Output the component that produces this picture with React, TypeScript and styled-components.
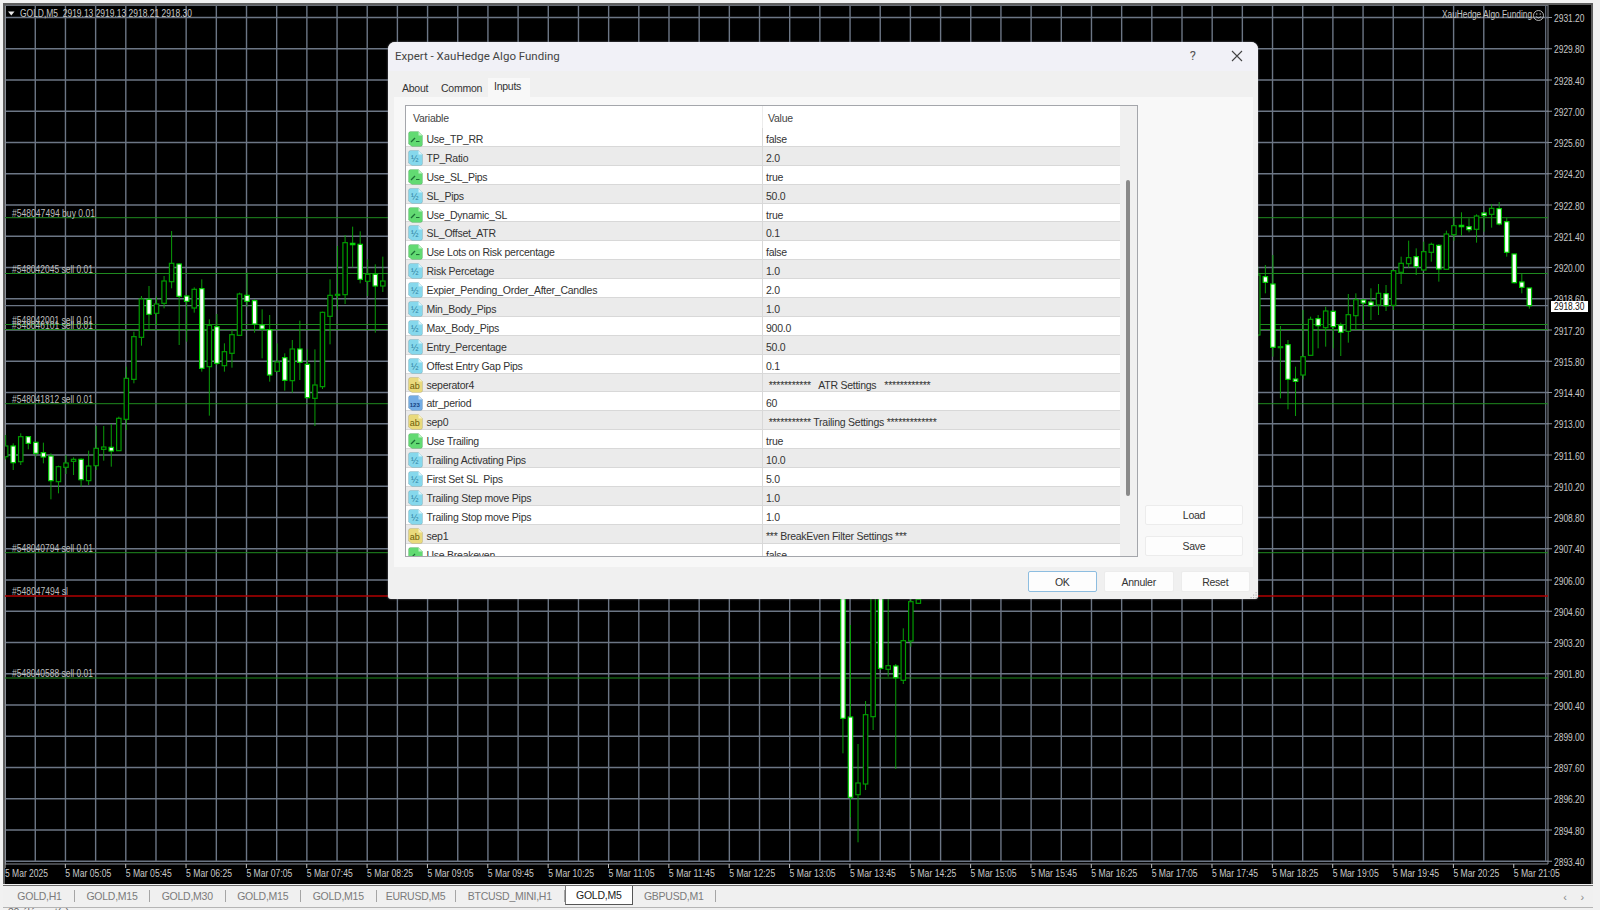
import { FC } from "react";
import styled, { createGlobalStyle } from "styled-components";

const GlobalStyle = createGlobalStyle`
  html, body {
    margin: 0;
    padding: 0;
    background: #f2f2f2;
  }
`;

const UI_FONT = `"Liberation Sans", Arial, sans-serif`;

const Page = styled.div`
  width: 1600px;
  height: 910px;
  box-sizing: border-box;
  padding: 3px 7px 0 3px;
  display: flex;
  flex-direction: column;
  overflow: hidden;
  background: #f1f1f1;
  font-family: ${UI_FONT};
  font-size: 10.5px;
  letter-spacing: -0.25px;
`;

const ChartFrame = styled.div`
  position: relative;
  flex: none;
  width: 1590px;
  height: 881px;
  box-sizing: border-box;
  border: 2px solid #5e5e5e;
  border-bottom: 0;
  background: #000;
`;

const ChartSvg = styled.svg`
  display: block;
  font-family: ${UI_FONT};
  letter-spacing: 0;
`;

const Dialog = styled.div`
  position: absolute;
  left: 383px;
  top: 37px;
  width: 870px;
  height: 557px;
  display: flex;
  flex-direction: column;
  border-radius: 7px 7px 3px 3px;
  background: #f0f0f0;
  box-shadow: 0 0 2px rgba(150, 150, 160, 0.9);
  overflow: hidden;
`;

const TitleBar = styled.div`
  flex: none;
  height: 29px;
  box-sizing: border-box;
  display: flex;
  align-items: center;
  padding: 0 15px 2px 7px;
  background: #f1f1f7;
  color: #444;
  font-size: 11.5px;
  letter-spacing: 0;
  font-family: Roboto, sans-serif;
`;

const Title = styled.div`
  flex: 1;
`;

const HelpMark = styled.span`
  margin-right: 35px;
  font-size: 13px;
  color: #555;
`;

const TabRow = styled.div`
  flex: none;
  height: 26px;
  display: flex;
  align-items: flex-end;
  padding-left: 9px;
`;

const PageTab = styled.div<{ $active?: boolean; $w: number }>`
  width: ${(p) => p.$w}px;
  height: ${(p) => (p.$active ? 19 : 17)}px;
  margin-right: 1px;
  box-sizing: border-box;
  padding: ${(p) => (p.$active ? "2px 0 0 6px" : "2px 0 0 5px")};
  background: ${(p) => (p.$active ? "#f8f8f8" : "#f0f0f0")};
  color: #333;
`;

const Panel = styled.div`
  flex: none;
  height: 470px;
  margin: 0 5px 0 6px;
  box-sizing: border-box;
  padding: 8px 10px 10px 11px;
  display: flex;
  background: #f8f8f8;
`;

const TableBox = styled.div`
  flex: none;
  width: 733px;
  height: 452px;
  box-sizing: border-box;
  display: flex;
  border: 1.5px solid #a4a6ab;
  background: #fff;
  overflow: hidden;
`;

const TableBody = styled.div`
  flex: 1;
  min-width: 0;
`;

const HeaderRow = styled.div`
  height: 22px;
  display: grid;
  grid-template-columns: 356px 1fr;
  align-items: center;
  color: #444;
`;

const HeaderCell = styled.div`
  height: 100%;
  box-sizing: border-box;
  display: flex;
  align-items: center;
  padding: 2px 0 0 7px;
  & + & {
    padding-left: 5px;
    border-left: 1px solid #ececec;
  }
`;

const Row = styled.div<{ $odd: boolean }>`
  height: 18.9px;
  box-sizing: border-box;
  display: grid;
  grid-template-columns: 356px 1fr;
  border-bottom: 1px solid #d8d8d8;
  background: ${(p) => (p.$odd ? "#ebebeb" : "#fff")};
  color: #333;
`;

const VariableCell = styled.div`
  display: flex;
  align-items: center;
  gap: 4px;
  padding-left: 1.5px;
  padding-top: 3px;
  white-space: pre;
`;

const ValueCell = styled.div`
  display: flex;
  align-items: center;
  padding: 3px 0 0 3px;
  border-left: 1px solid #d8d8d8;
  white-space: pre;
`;

const ScrollTrack = styled.div`
  flex: none;
  width: 17px;
  box-sizing: border-box;
  padding: 74px 0 0 5.5px;
  background: #f0f0f0;
`;

const ScrollThumb = styled.div`
  width: 4.5px;
  height: 316px;
  border-radius: 2px;
  background: #8a8a8a;
`;

const SideColumn = styled.div`
  flex: 1;
  display: flex;
  flex-direction: column;
  justify-content: flex-end;
  align-items: flex-end;
  gap: 11px;
  padding: 0 0 1px 0;
`;

const SideButton = styled.button`
  width: 98px;
  height: 20px;
  padding: 0;
  border: 1px solid #ececec;
  border-radius: 2px;
  background: #fdfdfd;
  font: 10.5px ${UI_FONT};
  letter-spacing: -0.25px;
  color: #333;
`;

const Footer = styled.div`
  flex: 1;
  display: flex;
  justify-content: flex-end;
  align-items: flex-start;
  gap: 7px;
  padding: 4px 8px 0 0;
`;

const FooterButton = styled.button<{ $primary?: boolean }>`
  width: 69.5px;
  height: 21px;
  padding: 0;
  border: 1px solid ${(p) => (p.$primary ? "#8dbde0" : "#ececec")};
  border-radius: 2px;
  background: #fdfdfd;
  font: 10.5px ${UI_FONT};
  letter-spacing: -0.25px;
  color: #333;
`;

const ResizeGrip = styled.svg`
  position: absolute;
  right: 0;
  bottom: 0;
`;

const TabBar = styled.div`
  flex: none;
  height: 21px;
  margin-top: 1px;
  padding-left: 2px;
  display: flex;
  align-items: stretch;
  border-top: 1px solid #6d6d6d;
  background: #f0f0f0;
`;

const ChartTab = styled.div<{ $w: number; $active?: boolean }>`
  flex: none;
  width: ${(p) => p.$w}px;
  box-sizing: border-box;
  display: flex;
  align-items: center;
  justify-content: center;
  margin: ${(p) => (p.$active ? "0 0 2px" : "4px 0 5px")};
  border-right: 1px solid ${(p) => (p.$active ? "#555" : "#a5a5a5")};
  border-bottom: ${(p) => (p.$active ? "1px solid #555" : "0")};
  border-left: ${(p) => (p.$active ? "1px solid #777" : "0")};
  background: ${(p) => (p.$active ? "#fff" : "transparent")};
  color: ${(p) => (p.$active ? "#222" : "#7b7b7b")};
`;

const TabSpacer = styled.div`
  flex: 1;
`;

const TabArrows = styled.div`
  display: flex;
  align-items: center;
  gap: 14px;
  padding-right: 9px;
  color: #888;
  font-size: 11px;
`;

const StatusStrip = styled.div`
  flex: none;
  height: 5px;
  overflow: hidden;
  padding-left: 5px;
  line-height: 9px;
  color: #666;
  border-top: 1px solid #b5b5b5;
`;

type VarKind = "bool" | "double" | "text" | "int";

const ICON_STYLE: Record<VarKind, { fill: string; fold: string; ink: string; label: string }> = {
  bool: { fill: "#62da72", fold: "#c4f3c9", ink: "#1c6f36", label: "" },
  double: { fill: "#86d8ec", fold: "#d8f4fb", ink: "#2a7f9e", label: "½" },
  text: { fill: "#e9da7c", fold: "#f8f1c4", ink: "#6d5d08", label: "ab" },
  int: { fill: "#74ade5", fold: "#cbe1f6", ink: "#123f80", label: "123" },
};

const VarIcon: FC<{ kind: VarKind }> = ({ kind }) => {
  const s = ICON_STYLE[kind];
  return (
    <svg width="15" height="16" viewBox="0 0 15 16" style={{ flex: "none" }}>
      <path
        d="M2.5 .5H10.5L14.5 4.5V13.5Q14.5 15.5 12.5 15.5H4L.5 13V2.5Q.5 .5 2.5 .5Z"
        fill={s.fill}
        stroke="#0000001a"
      />
      <path d="M10.5 .5V4.5H14.5Z" fill={s.fold} />
      {kind === "bool" ? (
        <g fill="none" stroke={s.ink} strokeWidth="1.2">
          <path d="M3 11L7 7" />
          <path d="M8 10.5H11.5" />
        </g>
      ) : (
        <text
          x="6.8"
          y="11.5"
          textAnchor="middle"
          fontSize={kind === "int" ? 6 : 9}
          letterSpacing="0"
          fontFamily={UI_FONT}
          fontWeight={kind === "int" ? 700 : 400}
          fill={s.ink}
        >
          {s.label}
        </text>
      )}
    </svg>
  );
};

const inputs: [string, string, VarKind][] = [
  ["Use_TP_RR", "false", "bool"],
  ["TP_Ratio", "2.0", "double"],
  ["Use_SL_Pips", "true", "bool"],
  ["SL_Pips", "50.0", "double"],
  ["Use_Dynamic_SL", "true", "bool"],
  ["SL_Offset_ATR", "0.1", "double"],
  ["Use Lots on Risk percentage", "false", "bool"],
  ["Risk Percetage", "1.0", "double"],
  ["Expier_Pending_Order_After_Candles", "2.0", "double"],
  ["Min_Body_Pips", "1.0", "double"],
  ["Max_Body_Pips", "900.0", "double"],
  ["Entry_Percentage", "50.0", "double"],
  ["Offest Entry Gap Pips", "0.1", "double"],
  ["seperator4", " ***********   ATR Settings   ************", "text"],
  ["atr_period", "60", "int"],
  ["sep0", " *********** Trailing Settings *************", "text"],
  ["Use Trailing", "true", "bool"],
  ["Trailing Activating Pips", "10.0", "double"],
  ["First Set SL  Pips", "5.0", "double"],
  ["Trailing Step move Pips", "1.0", "double"],
  ["Trailing Stop move Pips", "1.0", "double"],
  ["sep1", "*** BreakEven Filter Settings ***", "text"],
  ["Use Breakeven", "false", "bool"],
];

const chartTabs: [string, number][] = [
  ["GOLD,H1", 70],
  ["GOLD,M15", 75],
  ["GOLD,M30", 75.5],
  ["GOLD,M15", 75.5],
  ["GOLD,M15", 75.5],
  ["EURUSD,M5", 79],
  ["BTCUSD_MINI,H1", 109.5],
  ["GOLD,M5", 67.5],
  ["GBPUSD,M1", 83.5],
];

// candle data in 3x zoomed screen coordinates: index, high, body top, body bottom, low, white body
type Candle = [number, number, number, number, number, number];

const candles: Candle[] = [
  [0, 1305, 1338, 1370, 1378, 0], [1, 1330, 1338, 1388, 1410, 1], [2, 1300, 1310, 1385, 1395, 0],
  [3, 1308, 1310, 1330, 1348, 1], [4, 1325, 1327, 1360, 1370, 1], [5, 1328, 1358, 1371, 1390, 1],
  [6, 1360, 1368, 1442, 1498, 1], [7, 1397, 1400, 1445, 1480, 0], [8, 1365, 1389, 1402, 1422, 0],
  [9, 1372, 1378, 1384, 1425, 0], [10, 1375, 1378, 1439, 1460, 1], [11, 1352, 1398, 1442, 1455, 0],
  [12, 1278, 1345, 1397, 1410, 0], [13, 1278, 1341, 1348, 1382, 0], [14, 1272, 1342, 1353, 1400, 1],
  [15, 1250, 1255, 1352, 1352, 0], [16, 1100, 1135, 1258, 1290, 0], [17, 995, 1010, 1138, 1150, 0],
  [18, 888, 897, 1012, 1037, 0], [19, 858, 898, 943, 990, 1], [20, 890, 912, 940, 975, 0],
  [21, 828, 843, 910, 925, 0], [22, 693, 790, 845, 865, 0], [23, 790, 792, 889, 1035, 1],
  [24, 885, 888, 904, 1025, 1], [25, 862, 868, 924, 938, 0], [26, 838, 866, 1105, 1115, 1],
  [27, 958, 976, 1100, 1247, 0], [28, 942, 980, 1090, 1095, 1], [29, 1030, 1055, 1097, 1115, 0],
  [30, 990, 1004, 1060, 1103, 0], [31, 878, 882, 1006, 1008, 0], [32, 818, 886, 904, 920, 1],
  [33, 898, 902, 972, 998, 1], [34, 928, 975, 987, 1075, 1], [35, 945, 989, 1125, 1145, 1],
  [36, 1030, 1086, 1114, 1116, 0], [37, 1060, 1073, 1141, 1172, 1], [38, 1020, 1047, 1142, 1178, 0],
  [39, 962, 1047, 1087, 1140, 1], [40, 1048, 1093, 1193, 1195, 1], [41, 1048, 1155, 1195, 1278, 0],
  [42, 935, 937, 1160, 1167, 0], [43, 838, 886, 949, 1033, 0], [44, 738, 883, 886, 928, 0],
  [45, 705, 728, 884, 912, 0], [46, 680, 730, 734, 802, 1], [47, 694, 733, 838, 850, 1],
  [48, 778, 823, 844, 888, 0], [49, 793, 823, 858, 998, 1], [50, 770, 843, 858, 876, 0],
  // under the dialog's lower edge
  [111, 1500, 1500, 2155, 2260, 1], [112, 1875, 2151, 2392, 2452, 1], [113, 2232, 2349, 2384, 2527, 0],
  [114, 2103, 2144, 2352, 2370, 0], [115, 1500, 1500, 2150, 2190, 0], [116, 1500, 1500, 2005, 2010, 1],
  [117, 1500, 1997, 2008, 2030, 0], [118, 1992, 1998, 2033, 2307, 1], [119, 1885, 1922, 2041, 2052, 0],
  [120, 1770, 1805, 1923, 1940, 0], [121, 1500, 1798, 1810, 1812, 0],
  // right of the dialog
  [166, 800, 825, 1005, 1010, 0], [167, 795, 830, 847, 880, 1], [168, 765, 852, 1042, 1070, 1],
  [169, 978, 1040, 1043, 1195, 0], [170, 1020, 1034, 1138, 1228, 1], [171, 1100, 1137, 1144, 1248, 1],
  [172, 930, 1070, 1125, 1138, 0], [173, 950, 958, 1066, 1066, 0], [174, 945, 956, 977, 1045, 1],
  [175, 920, 933, 983, 1040, 0], [176, 932, 934, 980, 1045, 1], [177, 968, 976, 997, 1068, 1],
  [178, 882, 944, 994, 1028, 0], [179, 880, 899, 947, 990, 0], [180, 897, 900, 909, 968, 1],
  [181, 865, 906, 917, 960, 1], [182, 852, 880, 915, 945, 0], [183, 855, 881, 917, 933, 1],
  [184, 810, 812, 916, 930, 0], [185, 770, 790, 817, 852, 0], [186, 722, 773, 791, 803, 0],
  [187, 745, 770, 800, 825, 1], [188, 725, 755, 810, 812, 0], [189, 728, 733, 757, 785, 0],
  [190, 733, 736, 807, 845, 1], [191, 692, 702, 808, 808, 0], [192, 650, 677, 704, 722, 0],
  [193, 637, 676, 680, 708, 1], [194, 655, 680, 689, 697, 1], [195, 643, 648, 688, 728, 0],
  [196, 636, 639, 647, 695, 1], [197, 612, 625, 643, 683, 0], [198, 606, 626, 672, 676, 1],
  [199, 652, 665, 757, 770, 1], [200, 762, 762, 848, 850, 1], [201, 822, 846, 862, 880, 1],
  [202, 864, 864, 917, 926, 1],
];

const prices = [
  "2931.20", "2929.80", "2928.40", "2927.00", "2925.60", "2924.20", "2922.80", "2921.40", "2920.00", "2918.60",
  "2917.20", "2915.80", "2914.40", "2913.00", "2911.60", "2910.20", "2908.80", "2907.40", "2906.00", "2904.60",
  "2903.20", "2901.80", "2900.40", "2899.00", "2897.60", "2896.20", "2894.80", "2893.40",
];

const times = [
  "5 Mar 2025", "5 Mar 05:05", "5 Mar 05:45", "5 Mar 06:25", "5 Mar 07:05", "5 Mar 07:45", "5 Mar 08:25",
  "5 Mar 09:05", "5 Mar 09:45", "5 Mar 10:25", "5 Mar 11:05", "5 Mar 11:45", "5 Mar 12:25", "5 Mar 13:05",
  "5 Mar 13:45", "5 Mar 14:25", "5 Mar 15:05", "5 Mar 15:45", "5 Mar 16:25", "5 Mar 17:05", "5 Mar 17:45",
  "5 Mar 18:25", "5 Mar 19:05", "5 Mar 19:45", "5 Mar 20:25", "5 Mar 21:05",
];

const orders: [string, number, number, number][] = [
  ["#548047494 buy 0.01", 83, 213, 217.7],
  ["#548042045 sell 0.01", 81, 269, 273.5],
  ["#548042001 sell 0.01", 81, 320, 324.5],
  ["#548046101 sell 0.01", 81, 325, 329.5],
  ["#548041812 sell 0.01", 81, 399, 403.7],
  ["#548040794 sell 0.01", 81, 548, 552.7],
  ["#548040588 sell 0.01", 81, 673, 678],
];

const PLOT_RIGHT = 1548;
const PLOT_BOTTOM = 862;
const GRID = "#6c7685";

const rowY = (i: number) => 17.5 + i * 31.25;
const columnX = (i: number) => 5.1 + i * 30.177;

const CandleMark: FC<{ candle: Candle }> = ({ candle }) => {
  const [i, high, top, bottom, low, white] = candle;
  const x = 5.67 + i * 7.543;
  return (
    <g>
      <line x1={x} x2={x} y1={high / 3} y2={low / 3} stroke="#0a9c0a" strokeWidth="1" />
      <rect
        x={x - 2.2}
        y={top / 3}
        width="4.4"
        height={Math.max((bottom - top) / 3, 1)}
        fill={white ? "#fff" : "#000"}
        stroke={white ? "#00d000" : "#009c00"}
        strokeWidth="1.2"
      />
    </g>
  );
};

const Chart: FC = () => (
  <ChartSvg width="1586" height="879" viewBox="5 5 1586 879">
    {prices.map((_, i) => (
      <line key={i} x1="5" x2={PLOT_RIGHT} y1={rowY(i)} y2={rowY(i)} stroke={GRID} strokeWidth="1.4" />
    ))}
    {Array.from({ length: 50 }, (_, i) => (
      <line key={i} x1={columnX(i)} x2={columnX(i)} y1="5" y2={PLOT_BOTTOM} stroke={GRID} strokeWidth="1.4" />
    ))}
    <line x1="1545.7" x2="1545.7" y1="5" y2={PLOT_BOTTOM} stroke={GRID} strokeWidth="1.2" />
    <line x1={PLOT_RIGHT} x2={PLOT_RIGHT} y1="5" y2="864" stroke="#8a8f98" strokeWidth="1" />
    <line x1="5" x2={PLOT_RIGHT} y1="864" y2="864" stroke="#8a8f98" strokeWidth="1" />
    <line x1="5.5" x2="5.5" y1="5" y2="864" stroke="#8a8f98" strokeWidth="1" />
    <line x1="5" x2={PLOT_RIGHT} y1="5.5" y2="5.5" stroke="#6a6f78" strokeWidth="1" />

    {/* bid line */}
    <line x1="5" x2={PLOT_RIGHT} y1="305.7" y2="305.7" stroke={GRID} strokeWidth="1.2" />

    {orders.map(([, , , y]) => (
      <line key={y} x1="5" x2={PLOT_RIGHT} y1={y} y2={y} stroke="#1f8a1f" strokeWidth="1" />
    ))}
    <line x1="5" x2={PLOT_RIGHT} y1="596" y2="596" stroke="#b00000" strokeWidth="1.4" />

    {candles.map((c) => (
      <CandleMark key={c[0]} candle={c} />
    ))}

    {orders.map(([label, w, y]) => (
      <text key={label} x="12" y={y + 3.5} fontSize="10" textLength={w} lengthAdjust="spacingAndGlyphs" fill="#bdbdbd">
        {label}
      </text>
    ))}
    <text x="12" y="594.5" fontSize="10" textLength="56" lengthAdjust="spacingAndGlyphs" fill="#bdbdbd">
      #548047494 sl
    </text>

    <path d="M8 11.5H14.5L11.25 15.5Z" fill="#e8e8e8" />
    <text x="20" y="17" fontSize="10" textLength="172" lengthAdjust="spacingAndGlyphs" fill="#c6c6c6" xmlSpace="preserve">
      GOLD,M5  2919.13 2919.13 2918.21 2918.30
    </text>
    <text x="1442" y="18" fontSize="10" textLength="90" lengthAdjust="spacingAndGlyphs" fill="#c6c6c6">
      XauHedge Algo Funding
    </text>
    <g fill="none" stroke="#c6c6c6" strokeWidth="0.9">
      <circle cx="1538.5" cy="15.5" r="5" />
      <path d="M1535.8 16.5Q1538.5 19.5 1541.2 16.5" />
    </g>
    <circle cx="1536.8" cy="14" r=".7" fill="#c6c6c6" />
    <circle cx="1540.2" cy="14" r=".7" fill="#c6c6c6" />

    {prices.map((p, i) => (
      <g key={p}>
        <line x1={PLOT_RIGHT} x2="1552" y1={rowY(i)} y2={rowY(i)} stroke="#8a8f98" />
        <text x="1554" y={rowY(i) + 4.5} fontSize="10" textLength="30.5" lengthAdjust="spacingAndGlyphs" fill="#c8c8c8">
          {p}
        </text>
      </g>
    ))}
    <rect x="1551" y="301" width="37" height="11" fill="#fff" />
    <text x="1554" y="310" fontSize="10" textLength="30.5" lengthAdjust="spacingAndGlyphs" fill="#111">
      2918.30
    </text>

    {times.map((t, i) => {
      const x = 5 + i * 60.35;
      return (
        <g key={t}>
          <line x1={x} x2={x} y1="864" y2="868" stroke="#c0c0c0" />
          <text x={x} y="877" fontSize="10" textLength={i === 0 ? 43 : 46} lengthAdjust="spacingAndGlyphs" fill="#c8c8c8">
            {t}
          </text>
        </g>
      );
    })}
  </ChartSvg>
);

export default function App() {
  return (
    <>
      <GlobalStyle />
      <Page>
        <ChartFrame>
          <Chart />
          <Dialog>
            <TitleBar>
              <Title>Expert - XauHedge Algo Funding</Title>
              <HelpMark>?</HelpMark>
              <svg width="12" height="12" viewBox="0 0 12 12">
                <path d="M1 1L11 11M11 1L1 11" stroke="#444" strokeWidth="1.1" fill="none" />
              </svg>
            </TitleBar>
            <TabRow>
              <PageTab $w={38}>About</PageTab>
              <PageTab $w={51}>Common</PageTab>
              <PageTab $w={42} $active>
                Inputs
              </PageTab>
            </TabRow>
            <Panel>
              <TableBox>
                <TableBody>
                  <HeaderRow>
                    <HeaderCell>Variable</HeaderCell>
                    <HeaderCell>Value</HeaderCell>
                  </HeaderRow>
                  {inputs.map(([name, value, kind], i) => (
                    <Row key={name} $odd={i % 2 === 1}>
                      <VariableCell>
                        <VarIcon kind={kind} />
                        {name}
                      </VariableCell>
                      <ValueCell>{value}</ValueCell>
                    </Row>
                  ))}
                </TableBody>
                <ScrollTrack>
                  <ScrollThumb />
                </ScrollTrack>
              </TableBox>
              <SideColumn>
                <SideButton>Load</SideButton>
                <SideButton>Save</SideButton>
              </SideColumn>
            </Panel>
            <Footer>
              <FooterButton $primary>OK</FooterButton>
              <FooterButton>Annuler</FooterButton>
              <FooterButton>Reset</FooterButton>
            </Footer>
            <ResizeGrip width="8" height="8" viewBox="0 0 8 8">
              <g fill="#b5b5b5">
                <rect x="5.5" y="1" width="1.2" height="1.2" />
                <rect x="3" y="3.5" width="1.2" height="1.2" />
                <rect x="5.5" y="3.5" width="1.2" height="1.2" />
                <rect x=".5" y="6" width="1.2" height="1.2" />
                <rect x="3" y="6" width="1.2" height="1.2" />
                <rect x="5.5" y="6" width="1.2" height="1.2" />
              </g>
            </ResizeGrip>
          </Dialog>
        </ChartFrame>
        <TabBar>
          {chartTabs.map(([name, w], i) => (
            <ChartTab key={i} $w={w} $active={name === "GOLD,M5"}>
              {name}
            </ChartTab>
          ))}
          <TabSpacer />
          <TabArrows>
            <span>‹</span>
            <span>›</span>
          </TabArrows>
        </TabBar>
        <StatusStrip>30 élément(s)</StatusStrip>
      </Page>
    </>
  );
}
